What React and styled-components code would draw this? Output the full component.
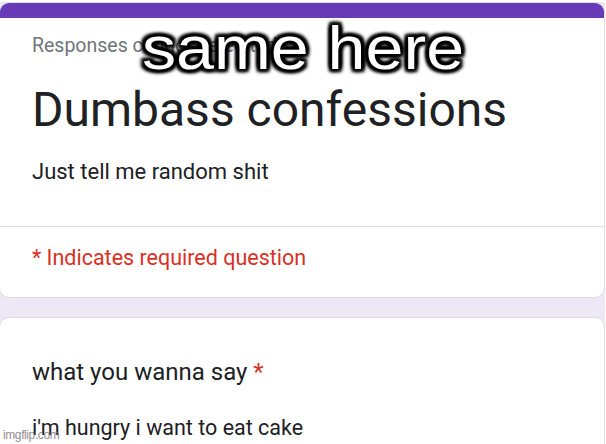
import styled, { createGlobalStyle } from "styled-components";

const GlobalStyle = createGlobalStyle`
  html, body {
    margin: 0;
    padding: 0;
    background: #fff;
    overflow: hidden;
  }
`;

const Page = styled.div`
  position: relative;
  width: 606px;
  height: 444px;
  overflow: hidden;
  background: #fff;
  font-family: Roboto, "Liberation Sans", sans-serif;
  color: #202124;
`;

const Sheet = styled.div`
  display: flex;
  flex-direction: column;
  gap: 19px;
  margin: 2px 1px 0 -1px;
  background: #ede7f6;
`;

const Card = styled.div`
  background: #fff;
  border: 1px solid #dadce0;
  border-radius: ${(p) => (p.$top ? "10px" : "10px 10px 0 0")};
  overflow: hidden;
`;

const TopBar = styled.div`
  height: 15px;
  background: #673ab7;
`;

const Section = styled.div`
  padding: 0 0 0 32px;
  border-top: ${(p) => (p.$divided ? "1px solid #dadce0" : "none")};
`;

const Note = styled.div`
  font-size: 19.5px;
  color: #70757a;
  padding-top: 16px;
  line-height: 24px;
`;

const Title = styled.h1`
  margin: 0;
  font-size: 48px;
  font-weight: 400;
  line-height: 56px;
  padding-top: 24px;
`;

const Description = styled.p`
  margin: 0;
  padding: 20px 0 40px;
  font-size: 22px;
  line-height: 28px;
`;

const Required = styled.p`
  margin: 0;
  padding: 18px 0 26px;
  font-size: 21.5px;
  line-height: 26px;
  color: #d93025;
`;

const Question = styled.div`
  padding: 39px 0 0;
  font-size: 24px;
  line-height: 30px;
`;

const Star = styled.span`
  color: #d93025;
`;

const Answer = styled.div`
  padding: 28px 0 20px;
  font-size: 21.5px;
  line-height: 26px;
`;

// meme caption laid over the screenshot
const Caption = styled.div`
  position: absolute;
  top: 13px;
  left: 0;
  right: 0;
  text-align: center;
  font-family: "Liberation Sans", Arial, sans-serif;
  font-size: 62px;
  line-height: 70px;
  color: #fff;
  transform: scaleX(1.1);
  text-shadow:
    3px 3px 3px #000, -3px -3px 3px #000, 3px -3px 3px #000, -3px 3px 3px #000,
    0 3px 3px #000, 0 -3px 3px #000, 3px 0 3px #000, -3px 0 3px #000;
`;

const Watermark = styled.div`
  position: absolute;
  left: 3px;
  bottom: 2px;
  font-family: "Liberation Sans", Arial, sans-serif;
  font-size: 12px;
  color: rgba(120, 120, 120, 0.85);
  letter-spacing: -0.4px;
`;

export default function App() {
  return (
    <Page>
      <GlobalStyle />
      <Sheet>
        <Card $top>
          <TopBar />
          <Section>
            <Note>Responses cannot be edited</Note>
            <Title>Dumbass confessions</Title>
            <Description>Just tell me random shit</Description>
          </Section>
          <Section $divided>
            <Required>* Indicates required question</Required>
          </Section>
        </Card>
        <Card>
          <Section>
            <Question>
              what you wanna say <Star>*</Star>
            </Question>
            <Answer>i'm hungry i want to eat cake</Answer>
          </Section>
        </Card>
      </Sheet>
      <Caption>same here</Caption>
      <Watermark>imgflip.com</Watermark>
    </Page>
  );
}
